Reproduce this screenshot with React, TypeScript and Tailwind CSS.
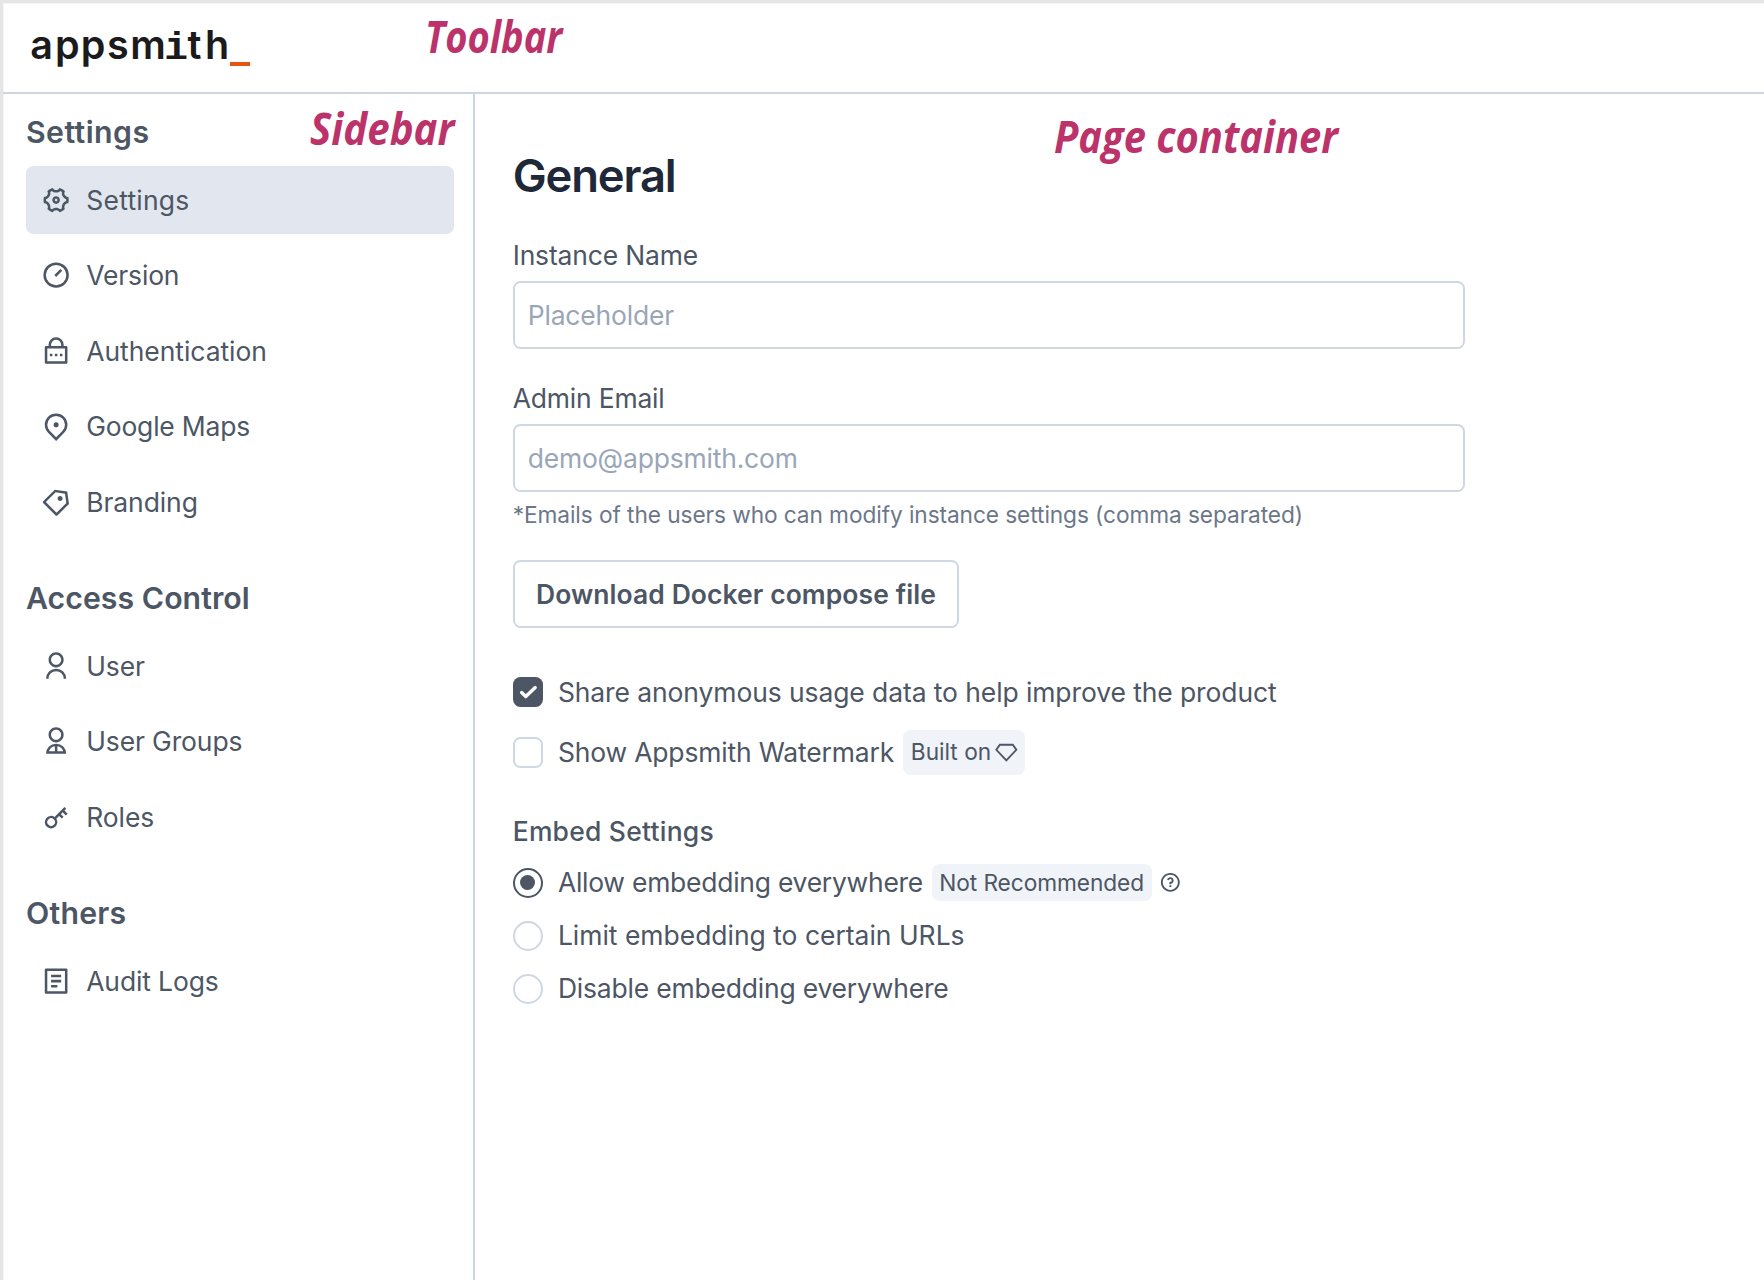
import React from "react";
import { RiSettings4Line, RiPriceTag3Line, RiQuestionLine } from "react-icons/ri";

function Glyph({ d }: { d: string }) {
  return (
    <svg viewBox="0 0 24 24" fill="currentColor" className="size-[30.24px] shrink-0">
      <path d={d} />
    </svg>
  );
}

function VersionIcon() {
  return (
    <svg viewBox="0 0 24 24" fill="none" stroke="currentColor" strokeWidth="2" className="size-[30.24px] shrink-0">
      <circle cx="12" cy="12" r="9.1" />
      <path d="M11.3 12.7 16.1 7.9" />
    </svg>
  );
}

const lockPath =
  "M18 8h2a1 1 0 0 1 1 1v12a1 1 0 0 1-1 1H4a1 1 0 0 1-1-1V9a1 1 0 0 1 1-1h2V7a6 6 0 1 1 12 0v1zM5 10v10h14V10H5zm6 4h2v2h-2v-2zm-4 0h2v2H7v-2zm8 0h2v2h-2v-2zm1-6V7a4 4 0 1 0-8 0v1h8z";
const pinPath =
  "M12 20.9l4.95-4.95a7 7 0 1 0-9.9 0L12 20.9zm0 2.828l-6.364-6.364a9 9 0 1 1 12.728 0L12 23.728zM12 13a2 2 0 1 1 0-4 2 2 0 0 1 0 4z";
const userPath =
  "M4 22a8 8 0 1 1 16 0h-2a6 6 0 1 0-12 0H4zm8-9c-3.315 0-6-2.685-6-6s2.685-6 6-6 6 2.685 6 6-2.685 6-6 6zm0-2c2.21 0 4-1.79 4-4s-1.79-4-4-4-4 1.79-4 4 1.79 4 4 4z";
const groupPath =
  "M4 22a8 8 0 1 1 16 0H4zm9-5.917V20h4.659A6.009 6.009 0 0 0 13 16.083zM11 20v-3.917A6.009 6.009 0 0 0 6.341 20H11zm1-7c-3.315 0-6-2.685-6-6s2.685-6 6-6 6 2.685 6 6-2.685 6-6 6zm0-2c2.21 0 4-1.79 4-4s-1.79-4-4-4-4 1.79-4 4 1.79 4 4 4z";
const keyPath =
  "M10.758 11.828l7.849-7.849 1.414 1.414-1.414 1.415 2.474 2.474-1.414 1.415-2.475-2.475-1.414 1.414 2.121 2.121-1.414 1.415-2.121-2.122-2.192 2.192a5.002 5.002 0 0 1-7.708 6.293 5 5 0 0 1 6.294-7.707zm-.637 6.293A3 3 0 1 0 5.88 13.88a3 3 0 0 0 4.242 4.242z";
const logPath =
  "M20 22H4a1 1 0 0 1-1-1V3a1 1 0 0 1 1-1h16a1 1 0 0 1 1 1v18a1 1 0 0 1-1 1zm-1-2V4H5v16h14zM8 7h8v2H8V7zm0 4h8v2H8v-2zm0 4h5v2H8v-2z";

type Item = { label: string; icon: React.ReactNode; tracking: string; active?: boolean };

const groups: { title: string; tracking: string; items: Item[] }[] = [
  {
    title: "Settings",
    tracking: "tracking-[0.45px]",
    items: [
      {
        label: "Settings",
        icon: <RiSettings4Line className="size-[30.24px] shrink-0" />,
        tracking: "tracking-[0.25px]",
        active: true,
      },
      { label: "Version", icon: <VersionIcon />, tracking: "tracking-[-0.15px]" },
      { label: "Authentication", icon: <Glyph d={lockPath} />, tracking: "tracking-[-0.03px]" },
      { label: "Google Maps", icon: <Glyph d={pinPath} />, tracking: "tracking-[-0.19px]" },
      {
        label: "Branding",
        icon: <RiPriceTag3Line className="size-[30.24px] shrink-0" />,
        tracking: "tracking-[-0.08px]",
      },
    ],
  },
  {
    title: "Access Control",
    tracking: "tracking-[0.05px]",
    items: [
      { label: "User", icon: <Glyph d={userPath} />, tracking: "tracking-[-0.12px]" },
      { label: "User Groups", icon: <Glyph d={groupPath} />, tracking: "tracking-[-0.12px]" },
      { label: "Roles", icon: <Glyph d={keyPath} />, tracking: "tracking-[-0.08px]" },
    ],
  },
  {
    title: "Others",
    tracking: "tracking-[0.25px]",
    items: [{ label: "Audit Logs", icon: <Glyph d={logPath} />, tracking: "tracking-[-0.12px]" }],
  },
];

const noteClass =
  "absolute origin-left whitespace-nowrap font-['Open_Sans',sans-serif] text-[44px] leading-[60px] font-bold italic text-[#bb336a]";

function Logo() {
  return (
    <div className="ml-[25.5px] flex h-[50px] items-center">
      <div className="-mt-[2px] flex items-baseline font-['Inter',sans-serif] text-[39.5px] leading-[50px] font-semibold text-[#1b1b1b]">
        <span className="flex w-[26px] justify-center">a</span>
        <span className="flex w-[25.7px] justify-center">p</span>
        <span className="flex w-[25.8px] justify-center">p</span>
        <span className="flex w-[23.5px] justify-center">s</span>
        <span className="flex w-[37px] justify-center">m</span>
        <span className="flex w-[19px] justify-center font-['Liberation_Mono',monospace] font-bold">i</span>
        <span className="flex w-[18px] justify-center">t</span>
        <span className="flex w-[27px] justify-center">h</span>
      </div>
      <span className="mt-[33px] h-[4px] w-[20px] bg-[#e15615]" />
    </div>
  );
}

function Radio({ checked = false }: { checked?: boolean }) {
  return (
    <span
      className={
        checked
          ? "flex size-[30.2px] shrink-0 items-center justify-center rounded-full border-2 border-[#4c5664]"
          : "size-[30.2px] shrink-0 rounded-full border-2 border-[#cfd7e2]"
      }
    >
      {checked && <span className="size-[15px] rounded-full bg-[#4c5664]" />}
    </span>
  );
}

export default function App() {
  return (
    <div className="relative flex h-[1280px] w-[1764px] flex-col overflow-hidden border-t-[3px] border-l-[3px] border-[#e5e5e5] bg-white font-['Inter',sans-serif] text-[26.46px] text-[#4c5664] shadow-[inset_1px_1px_0_#f5f5f5]">
      <header className="flex h-[91px] shrink-0 items-center border-b-2 border-[#cdd6e0]">
        <Logo />
      </header>

      <div className="flex min-h-0 flex-1">
        <aside className="flex w-[472px] shrink-0 flex-col gap-[43.4px] border-r-2 border-[#cdd6e0] pt-[19px] pr-[19px] pl-[23px]">
          {groups.map((group) => (
            <section key={group.title}>
              <h2 className={`mb-[14.7px] text-[30.24px] leading-[38px] font-semibold ${group.tracking}`}>{group.title}</h2>
              <ul className="flex flex-col gap-[7.5px]">
                {group.items.map((item) => (
                  <li
                    key={item.label}
                    className={`flex h-[68px] items-center gap-[15px] rounded-[7.5px] px-[15px] ${item.active ? "bg-[#e2e6ee]" : ""}`}
                  >
                    {item.icon}
                    <span className={`leading-[34px] ${item.tracking}`}>{item.label}</span>
                  </li>
                ))}
              </ul>
            </section>
          ))}
        </aside>

        <main className="flex flex-col items-start pt-[54px] pl-[37.7px]">
          <h1 className="mb-[31.7px] text-[45.36px] leading-[56px] font-semibold tracking-[-1.15px] text-[#1f2838]">General</h1>

          <label className="mb-[7.5px] leading-[38px] tracking-[-0.16px]">Instance Name</label>
          <input
            placeholder="Placeholder"
            className="mb-[29.7px] h-[68px] w-[952px] rounded-[7.5px] border-2 border-[#cfd7e2] px-[13px] tracking-[-0.17px] placeholder:text-[#9aa6b7]"
          />

          <label className="mb-[7.4px] leading-[38px] tracking-[-0.18px]">Admin Email</label>
          <input
            placeholder="demo@appsmith.com"
            className="mb-[6.5px] h-[68px] w-[952px] rounded-[7.5px] border-2 border-[#cfd7e2] px-[13px] tracking-[-0.18px] placeholder:text-[#9aa6b7]"
          />
          <p className="mb-[29.4px] text-[22.68px] leading-[32px] tracking-[-0.08px] text-[#6b7789]">
            *Emails of the users who can modify instance settings (comma separated)
          </p>

          <button className="mb-[41.7px] h-[67.6px] w-[446.6px] rounded-[7.5px] border-2 border-[#cfd7e2] pt-px font-semibold tracking-[0.09px]">
            Download Docker compose file
          </button>

          <div className="mb-[15.5px] flex h-[45px] items-center gap-[15px]">
            <span className="flex size-[30.2px] shrink-0 items-center justify-center rounded-[7.5px] bg-[#4c5664]">
              <svg viewBox="0 0 30 30" className="size-[30px]" fill="none" stroke="white" strokeWidth="3.4" strokeLinecap="round" strokeLinejoin="round">
                <path d="M8.6 15.6 12.8 19.6 22.2 10.6" />
              </svg>
            </span>
            <span className="mt-px tracking-[-0.08px]">Share anonymous usage data to help improve the product</span>
          </div>
          <div className="mb-[37.4px] flex h-[45px] items-center">
            <span className="mr-[15px] size-[30.2px] shrink-0 rounded-[7.5px] border-2 border-[#cfd7e2]" />
            <span className="mr-[9.2px] tracking-[-0.15px]">Show Appsmith Watermark</span>
            <span className="flex h-[45px] items-center gap-1 rounded-[7.5px] bg-[#f0f3f8] px-[7.5px] text-[22.68px]">
              <span className="-mt-px">Built on</span>
              <svg viewBox="0 0 24 24" className="size-[22.68px]" fill="none" stroke="currentColor" strokeWidth="2">
                <path d="M5.2 4H18.8L22.6 9.3 12 20.6 1.4 9.3Z" />
              </svg>
            </span>
          </div>

          <h3 className="mb-[13.5px] leading-[38px] font-medium tracking-[0.24px]">Embed Settings</h3>
          <div className="flex flex-col gap-[15.4px]">
            <div className="flex h-[37.6px] items-center">
              <Radio checked />
              <span className="mr-[8.6px] ml-[15px] tracking-[-0.24px]">Allow embedding everywhere</span>
              <span className="mr-[7.5px] flex h-[37.6px] items-center rounded-[7.5px] bg-[#f0f3f8] px-[7.5px] text-[22.68px] tracking-[-0.06px]">
                Not Recommended
              </span>
              <RiQuestionLine className="size-[22.68px]" />
            </div>
            <div className="flex h-[37.6px] items-center gap-[15px]">
              <Radio />
              <span>Limit embedding to certain URLs</span>
            </div>
            <div className="flex h-[37.6px] items-center gap-[15px]">
              <Radio />
              <span className="tracking-[-0.18px]">Disable embedding everywhere</span>
            </div>
          </div>
        </main>
      </div>

      <span className={`${noteClass} top-[3px] left-[422px] scale-x-[0.865]`}>Toolbar</span>
      <span className={`${noteClass} top-[95px] left-[307px] scale-x-[0.915]`}>Sidebar</span>
      <span className={`${noteClass} top-[103px] left-[1051px] scale-x-[0.907]`}>Page container</span>
    </div>
  );
}
